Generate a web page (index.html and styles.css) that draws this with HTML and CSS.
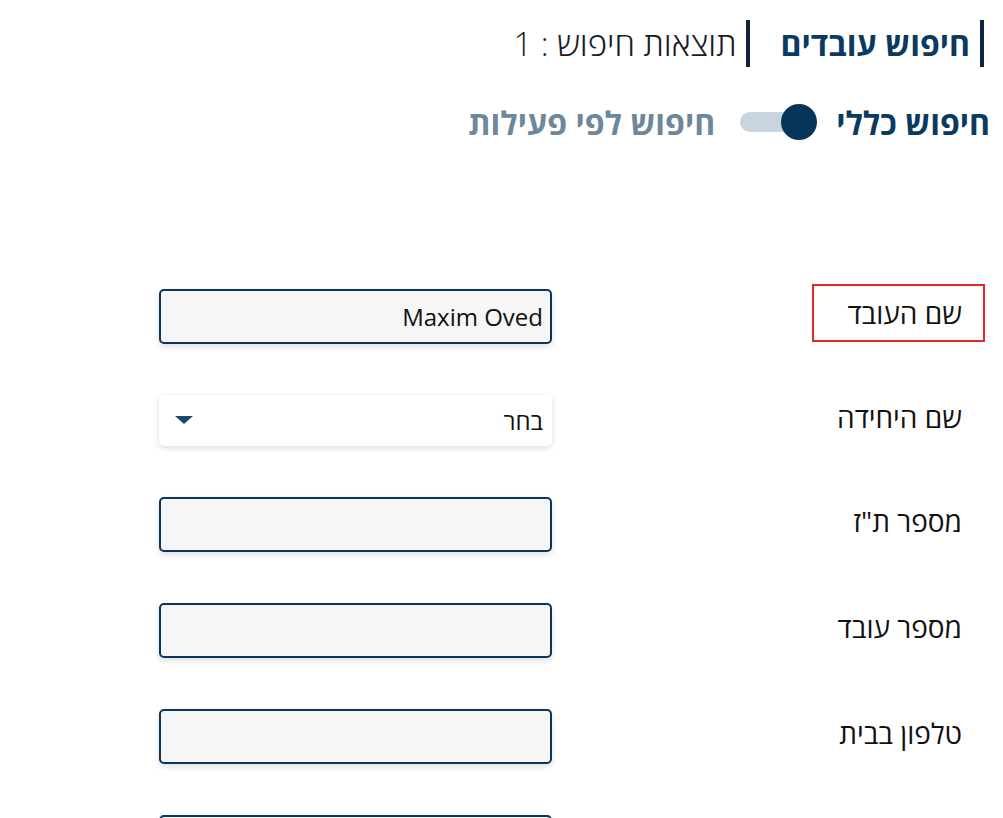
FILE: index.html
```html
<!DOCTYPE html>
<html lang="he" dir="rtl">
<head>
<meta charset="utf-8">
<title>חיפוש עובדים</title>
<link rel="stylesheet" href="styles.css">
</head>
<body>
<div class="page">
  <header class="header">
    <h1 class="title">חיפוש עובדים</h1>
    <div class="results">תוצאות חיפוש : 1</div>
  </header>
  <div class="mode">
    <span class="mode-label active">חיפוש כללי</span>
    <span class="switch"><span class="knob"></span></span>
    <span class="mode-label inactive">חיפוש לפי פעילות</span>
  </div>
  <form class="form">
    <div class="row">
      <label class="label label-focus">שם העובד</label>
      <div class="field"><input class="input" type="text" value="Maxim Oved"></div>
    </div>
    <div class="row">
      <label class="label">שם היחידה</label>
      <div class="field field-select"><div class="select"><span>בחר</span><span class="arrow"></span></div></div>
    </div>
    <div class="row">
      <label class="label">מספר ת"ז</label>
      <div class="field"><input class="input" type="text"></div>
    </div>
    <div class="row">
      <label class="label">מספר עובד</label>
      <div class="field"><input class="input" type="text"></div>
    </div>
    <div class="row">
      <label class="label">טלפון בבית</label>
      <div class="field"><input class="input" type="text"></div>
    </div>
    <div class="row">
      <label class="label">טלפון נייד</label>
      <div class="field"><input class="input" type="text"></div>
    </div>
  </form>
</div>
</body>
</html>
```
FILE: styles.css
```css
html, body {
  margin: 0;
  padding: 0;
  background: #ffffff;
}
body {
  font-family: "Open Sans", "Noto Sans", "DejaVu Sans", sans-serif;
  color: #111;
  overflow: hidden;
}
.page {
  padding: 20px 19px 0 0;
}
.header {
  display: flex;
  align-items: center;
  gap: 30px;
  height: 47px;
}
.title, .results {
  margin: 0;
  border-right: 4px solid #0d2440;
  padding-right: 10px;
  height: 47px;
  display: flex;
  align-items: center;
}
.title {
  font-size: 32px;
  font-weight: 700;
  color: #0b3a60;
}
.results {
  font-size: 33px;
  font-weight: 300;
  color: #1b1b2a;
}
.mode {
  display: flex;
  align-items: center;
  margin-top: 37px;
  margin-right: -6px;
  height: 36px;
}
.mode-label {
  font-size: 32px;
  font-weight: 700;
}
.active { color: #0b3a60; }
.inactive { color: #6e879b; }
.switch {
  position: relative;
  width: 75px;
  height: 20px;
  border-radius: 10px;
  background: #c9d4de;
  margin: 0 21px 0 25px;
}
.knob {
  position: absolute;
  right: -2px;
  top: -8px;
  width: 36px;
  height: 36px;
  border-radius: 50%;
  background: #07345a;
}
.form {
  margin-top: 149px;
  margin-right: -1px;
  margin-left: 159px;
  display: flex;
  flex-direction: column;
  gap: 51px;
}
.row {
  display: flex;
  align-items: center;
  justify-content: space-between;
}
.label {
  box-sizing: border-box;
  font-size: 28px;
  font-weight: 400;
  color: #111;
  width: 173px;
  height: 58px;
  margin-top: -7px;
  padding: 0 21px 0 0;
  display: flex;
  align-items: center;
  border: 2px solid transparent;
}
.label-focus {
  border-color: #e3262a;
}
.field {
  width: 393px;
}
.field-select {
  margin-top: -1px;
}
.input {
  display: block;
  box-sizing: border-box;
  width: 393px;
  height: 55px;
  border: 2px solid #0b355b;
  border-radius: 5px;
  background: #f6f6f6;
  box-shadow: 0 3px 6px rgba(0,0,0,0.12);
  font-family: inherit;
  font-size: 24px;
  color: #111;
  padding: 0 7px;
  text-align: right;
  direction: ltr;
  outline: none;
}
.select {
  box-sizing: border-box;
  width: 393px;
  height: 51px;
  border-radius: 5px;
  background: #fff;
  box-shadow: 0 2px 6px rgba(0,0,0,0.14);
  display: flex;
  align-items: center;
  justify-content: space-between;
  padding: 0 9px 0 16px;
  font-size: 24px;
  color: #111;
}
.arrow {
  width: 0;
  height: 0;
  border-left: 9px solid transparent;
  border-right: 9px solid transparent;
  border-top: 8px solid #1d4469;
}
```
